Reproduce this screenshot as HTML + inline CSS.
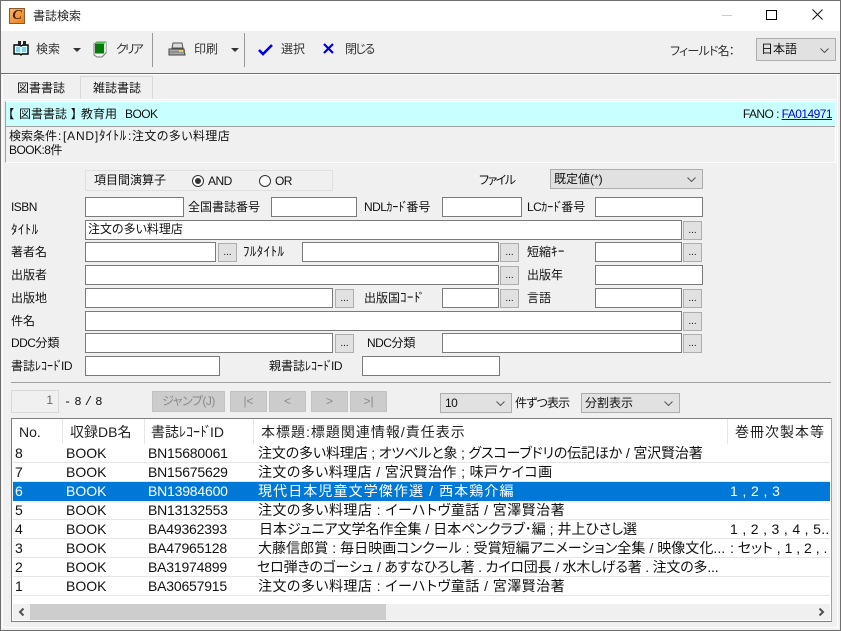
<!DOCTYPE html>
<html lang="ja"><head><meta charset="utf-8"><title>書誌検索</title>
<style>
*{box-sizing:border-box}
html,body{margin:0;padding:0;width:841px;height:631px;overflow:hidden;background:#f0f0f0}
body{font:12px/16px "Liberation Sans","Noto Sans CJK JP",sans-serif;color:#111;position:relative;font-feature-settings:"palt"}
.a,.l,.i,.b,.s,.n,.c{position:absolute}
.l{white-space:nowrap;height:16px}
.e{font-size:12px;letter-spacing:-.55px}
.k{font-size:13px;letter-spacing:.4px}
.d{margin:0 -2px 0 -2px}
.i{background:#fff;border:1px solid #7a7a7a;height:20px}
.b{width:19px;height:19px;background:#e1e1e1;border:1px solid #adadad;font-size:10px;line-height:18px;text-align:center}
.s{background:#e1e1e1;border:1px solid #adadad;padding-left:5px;line-height:18px}
.s svg{position:absolute;right:6px;top:7px}
.n{top:391px;height:21px;width:37px;background:#ccc;border:1px solid #c2c2c2;color:#8a8a8a;text-align:center;line-height:18px}
.c{font-size:14px;line-height:18px;white-space:nowrap;height:18px;overflow:hidden}
.r{position:absolute;left:13px;width:817px;height:19px;border-bottom:1px solid #e6e6e6;background:#fff}
.r .c{top:0}
.sel{background:#0078d7;border-bottom:0}
.sel .c{color:#fff}
</style></head><body>
<!-- window frame -->
<div class="a" style="left:0;top:0;width:841px;height:1px;background:#6f6f6f"></div>
<div class="a" style="left:0;top:0;width:1px;height:631px;background:#6f6f6f"></div>
<div class="a" style="left:840px;top:0;width:1px;height:631px;background:#6f6f6f"></div>
<div class="a" style="left:0;top:630px;width:841px;height:1px;background:#6f6f6f"></div>
<div class="a" style="left:1px;top:1px;width:839px;height:30px;background:#fff"></div>
<!-- logo -->
<div class="a" style="left:9px;top:8px;width:16px;height:16px;background:linear-gradient(135deg,#f9b36a,#e8801f);border:1px solid #8a5a2a;font:italic bold 14px/14px 'Liberation Serif',serif;color:#4a2208;text-align:center">C</div>
<div class="l" style="left:33px;top:8px;color:#222">書誌検索</div>
<!-- title buttons -->
<div class="a" style="left:722px;top:15px;width:10px;height:1px;background:#ccc"></div>
<div class="a" style="left:766px;top:10px;width:11px;height:10px;border:1px solid #000"></div>
<svg class="a" style="left:812px;top:9px" width="11" height="11"><path d="M.5.5l10 10M10.5.5l-10 10" stroke="#111" fill="none"/></svg>
<!-- toolbar -->
<div class="a" style="left:1px;top:73px;width:839px;height:1px;background:#707070"></div>
<svg class="a" style="left:13px;top:40px" width="16" height="16"><path d="M1 5h5l2 1 2-1h5v9H9l-1 1-1-1H1z" fill="#d8ffff" stroke="#000" stroke-width="1.4"/><path d="M3 7h4v5H3zM9 7h4v5H9z" fill="#7fd4f0"/><path d="M5 1h3v5H5zM10 1h3v5h-3z" fill="#222"/></svg>
<div class="l" style="left:36px;top:41px;color:#333">検索</div>
<svg class="a" style="left:73px;top:48px" width="9" height="5"><path d="M0 0h8L4 4z" fill="#333"/></svg>
<svg class="a" style="left:93px;top:41px" width="14" height="17"><path d="M1 3l3-2h9v11l-3 3-1 1H4l-3-2z" fill="#f2f2f2" stroke="#777"/><rect x="2" y="3" width="9" height="9.5" fill="#067a06"/><path d="M11 3l2-2v10l-2 2z" fill="#d8e8d8"/><path d="M2 3l2-2h9l-2 2z" fill="#58b858"/></svg>
<div class="l" style="left:116px;top:41px;color:#333;letter-spacing:-2px">クリア</div>
<div class="a" style="left:152px;top:33px;width:1px;height:34px;background:#999"></div>
<svg class="a" style="left:168px;top:42px" width="18" height="15"><path d="M5 1h9l1 5H4z" fill="#ddd" stroke="#555"/><path d="M1 7h15l1 6H1z" fill="#aaa" stroke="#444"/><path d="M2 10h15" stroke="#777"/><path d="M11 8h4v2h-4z" fill="#e8d05a"/></svg>
<div class="l" style="left:194px;top:41px;color:#333">印刷</div>
<svg class="a" style="left:231px;top:48px" width="9" height="5"><path d="M0 0h8L4 4z" fill="#333"/></svg>
<div class="a" style="left:244px;top:33px;width:1px;height:34px;background:#999"></div>
<svg class="a" style="left:258px;top:43px" width="16" height="13"><path d="M1 7l4 4L14 2" stroke="#0000e0" stroke-width="2.6" fill="none"/></svg>
<div class="l" style="left:281px;top:41px;color:#333">選択</div>
<svg class="a" style="left:323px;top:43px" width="11" height="11"><path d="M1 1l9 9M10 1l-9 9" stroke="#0000d8" stroke-width="2.2" fill="none"/></svg>
<div class="l" style="left:345px;top:41px;color:#333;letter-spacing:-1.5px">閉じる</div>
<div class="l" style="left:670px;top:43px;color:#333;letter-spacing:-.8px">フィールド名：</div>
<div class="s" style="left:756px;top:38px;width:80px;height:23px;padding-left:4px;line-height:20px"><span>日本語</span><svg width="9" height="6" style="top:9px"><path d="M.5 .5l4 4 4-4" stroke="#555" fill="none"/></svg></div>
<!-- tabs -->
<div class="a" style="left:2px;top:74px;width:836px;height:1px;background:#fff"></div>
<div class="l" style="left:17px;top:80px">図書書誌</div>
<div class="a" style="left:80px;top:76px;width:73px;height:24px;border:1px solid #d9d9d9;border-bottom:0"></div>
<div class="l" style="left:93px;top:80px">雑誌書誌</div>
<div class="a" style="left:2px;top:99px;width:836px;height:1px;background:#fff"></div>
<div class="a" style="left:2px;top:75px;width:1px;height:552px;background:#fff"></div>
<div class="a" style="left:837px;top:75px;width:1px;height:552px;background:#fff"></div>
<div class="a" style="left:2px;top:627px;width:836px;height:1px;background:#fff"></div>
<!-- header bar -->
<div class="a" style="left:5px;top:101px;width:831px;height:62px;border:1px solid #fff;border-left:1px solid #a0a0a0"></div>
<div class="a" style="left:6px;top:102px;width:829px;height:24px;background:#c8ffff"></div>
<div class="a" style="left:6px;top:126px;width:829px;height:1px;background:#a0a0a0"></div>
<div class="l" style="left:8px;top:106px">【</div>
<div class="l" style="left:19px;top:106px">図書書誌</div>
<div class="l" style="left:71px;top:106px">】</div>
<div class="l" style="left:81px;top:106px">教育用</div>
<div class="l e" style="left:125px;top:106px">BOOK</div>
<div class="l e" style="right:9px;top:106px">FANO : <span style="color:#0000e6;text-decoration:underline">FA014971</span></div>
<div class="l" style="left:9px;top:128px">検索条件</div>
<div class="l" style="left:58px;top:128px">:</div>
<div class="l" style="left:63px;top:128px;letter-spacing:.8px">[AND]</div>
<div class="l k" style="left:99px;top:128px">ﾀｲﾄﾙ</div>
<div class="l" style="left:128px;top:128px">:</div>
<div class="l" style="left:132px;top:128px;letter-spacing:.4px">注文の多い料理店</div>
<div class="l e" style="left:9px;top:142px">BOOK:8件</div>
<!-- operator group -->
<div class="a" style="left:85px;top:170px;width:248px;height:21px;border:1px solid #e0e0e0"></div>
<div class="l" style="left:94px;top:172px">項目間演算子</div>
<svg class="a" style="left:191px;top:174px" width="14" height="14"><circle cx="7" cy="7" r="5.5" fill="#fff" stroke="#333"/><circle cx="7" cy="7" r="3" fill="#333"/></svg>
<div class="l e" style="left:208px;top:173px">AND</div>
<svg class="a" style="left:258px;top:174px" width="14" height="14"><circle cx="7" cy="7" r="5.5" fill="#fff" stroke="#333"/></svg>
<div class="l e" style="left:275px;top:173px">OR</div>
<div class="l" style="left:479px;top:172px;letter-spacing:-1.5px">ファイル</div>
<div class="s" style="left:550px;top:169px;width:153px;height:20px;padding-left:3px;line-height:18px">既定値(*)<svg width="9" height="6"><path d="M.5 .5l4 4 4-4" stroke="#555" fill="none"/></svg></div>
<!-- row 1 -->
<div class="l e" style="left:11px;top:199px">ISBN</div>
<div class="i" style="left:85px;top:197px;width:99px"></div>
<div class="l" style="left:188px;top:199px">全国書誌番号</div>
<div class="i" style="left:271px;top:197px;width:86px"></div>
<div class="l" style="left:364px;top:199px"><span class="e">NDL</span>ｶｰﾄ<span class="d">ﾞ</span>番号</div>
<div class="i" style="left:442px;top:197px;width:80px"></div>
<div class="l" style="left:527px;top:199px"><span class="e">LC</span>ｶｰﾄ<span class="d">ﾞ</span>番号</div>
<div class="i" style="left:595px;top:197px;width:108px"></div>
<!-- row 2 -->
<div class="l k" style="left:11px;top:222px">ﾀｲﾄﾙ</div>
<div class="i" style="left:85px;top:220px;width:597px;padding-left:2px;line-height:17px">注文の多い料理店</div>
<div class="b" style="left:683px;top:221px">...</div>
<!-- row 3 -->
<div class="l" style="left:11px;top:244px">著者名</div>
<div class="i" style="left:85px;top:242px;width:131px"></div>
<div class="b" style="left:218px;top:243px">...</div>
<div class="l k" style="left:243px;top:244px">ﾌﾙﾀｲﾄﾙ</div>
<div class="i" style="left:302px;top:242px;width:197px"></div>
<div class="b" style="left:500px;top:243px">...</div>
<div class="l" style="left:527px;top:244px">短縮<span class="k">ｷｰ</span></div>
<div class="i" style="left:595px;top:242px;width:87px"></div>
<div class="b" style="left:683px;top:243px">...</div>
<!-- row 4 -->
<div class="l" style="left:11px;top:267px">出版者</div>
<div class="i" style="left:85px;top:265px;width:414px"></div>
<div class="b" style="left:500px;top:266px">...</div>
<div class="l" style="left:527px;top:267px">出版年</div>
<div class="i" style="left:595px;top:265px;width:108px"></div>
<!-- row 5 -->
<div class="l" style="left:11px;top:290px">出版地</div>
<div class="i" style="left:85px;top:288px;width:248px"></div>
<div class="b" style="left:335px;top:289px">...</div>
<div class="l" style="left:364px;top:290px">出版国<span class="k">ｺｰﾄ</span><span class="d">ﾞ</span></div>
<div class="i" style="left:442px;top:288px;width:57px"></div>
<div class="b" style="left:500px;top:289px">...</div>
<div class="l" style="left:527px;top:290px">言語</div>
<div class="i" style="left:595px;top:288px;width:87px"></div>
<div class="b" style="left:683px;top:289px">...</div>
<!-- row 6 -->
<div class="l" style="left:11px;top:313px">件名</div>
<div class="i" style="left:85px;top:311px;width:597px"></div>
<div class="b" style="left:683px;top:312px">...</div>
<!-- row 7 -->
<div class="l" style="left:11px;top:335px"><span class="e">DDC</span>分類</div>
<div class="i" style="left:85px;top:333px;width:248px"></div>
<div class="b" style="left:335px;top:334px">...</div>
<div class="l" style="left:367px;top:335px"><span class="e">NDC</span>分類</div>
<div class="i" style="left:442px;top:333px;width:240px"></div>
<div class="b" style="left:683px;top:334px">...</div>
<!-- row 8 -->
<div class="l" style="left:11px;top:358px">書誌ﾚｺｰﾄ<span class="d">ﾞ</span><span class="e">ID</span></div>
<div class="i" style="left:85px;top:356px;width:135px"></div>
<div class="l" style="left:269px;top:358px">親書誌ﾚｺｰﾄ<span class="d">ﾞ</span><span class="e">ID</span></div>
<div class="i" style="left:362px;top:356px;width:138px"></div>
<div class="a" style="left:11px;top:382px;width:820px;height:1px;background:#a0a0a0"></div>
<!-- pager -->
<div class="a" style="left:11px;top:390px;width:48px;height:23px;border:1px solid #d9d9d9;text-align:right;padding-right:5px;color:#666;line-height:18px">1</div>
<div class="l" style="left:64px;top:394px;font-family:'Liberation Mono',monospace;letter-spacing:-2px">- 8 / 8</div>
<div class="n" style="left:152px;width:73px;letter-spacing:-.5px">ジャンプ(J)</div>
<div class="n" style="left:230px">|&lt;</div>
<div class="n" style="left:269px">&lt;</div>
<div class="n" style="left:311px">&gt;</div>
<div class="n" style="left:350px">&gt;|</div>
<div class="s" style="left:440px;top:393px;width:72px;height:20px;padding-left:4px;line-height:18px"><span class="e">10</span><svg width="9" height="6"><path d="M.5 .5l4 4 4-4" stroke="#555" fill="none"/></svg></div>
<div class="l" style="left:515px;top:395px;letter-spacing:-.8px">件ずつ表示</div>
<div class="s" style="left:581px;top:393px;width:99px;height:20px;padding-left:3px;line-height:18px">分割表示<svg width="9" height="6"><path d="M.5 .5l4 4 4-4" stroke="#555" fill="none"/></svg></div>
<!-- table -->
<div class="a" style="left:11px;top:418px;width:821px;height:204px;border:1px solid #7f7f7f;border-right-color:#a0a0a0;background:#fff"></div>
<div class="a" style="left:62px;top:419px;width:1px;height:25px;background:#e5e5e5"></div>
<div class="a" style="left:144px;top:419px;width:1px;height:25px;background:#e5e5e5"></div>
<div class="a" style="left:253px;top:419px;width:1px;height:25px;background:#e5e5e5"></div>
<div class="a" style="left:727px;top:419px;width:1px;height:25px;background:#e5e5e5"></div>
<div class="c" style="left:19px;top:423px;color:#222">No.</div>
<div class="c" style="left:70px;top:423px;color:#222">収録DB名</div>
<div class="c" style="left:151px;top:423px;color:#222">書誌ﾚｺｰﾄ<span class="d">ﾞ</span>ID</div>
<div class="c" style="left:261px;top:423px;color:#222;letter-spacing:1px">本標題:標題関連情報/責任表示</div>
<div class="c" style="left:735px;top:423px;color:#222;letter-spacing:1px">巻冊次製本等</div>

<div class="r" style="top:444px"><span class="c" style="left:2px">8</span><span class="c" style="left:53px">BOOK</span><span class="c" style="left:135px;letter-spacing:-.2px">BN15680061</span><span class="c" style="left:245px;letter-spacing:-.15px">注文の多い料理店 ; オツベルと象 ; グスコーブドリの伝記ほか / 宮沢賢治著</span></div>
<div class="r" style="top:463px"><span class="c" style="left:2px">7</span><span class="c" style="left:53px">BOOK</span><span class="c" style="left:135px;letter-spacing:-.2px">BN15675629</span><span class="c" style="left:245px;letter-spacing:.4px">注文の多い料理店 / 宮沢賢治作 ; 味戸ケイコ画</span></div>
<div class="r sel" style="top:482px"><span class="c" style="left:2px">6</span><span class="c" style="left:53px">BOOK</span><span class="c" style="left:135px;letter-spacing:-.2px">BN13984600</span><span class="c" style="left:245px;letter-spacing:1.1px">現代日本児童文学傑作選 / 西本鶏介編</span><span class="c" style="left:717px;letter-spacing:.4px">1 , 2 , 3</span></div>
<div class="r" style="top:501px"><span class="c" style="left:2px">5</span><span class="c" style="left:53px">BOOK</span><span class="c" style="left:135px;letter-spacing:-.2px">BN13132553</span><span class="c" style="left:245px;letter-spacing:.45px">注文の多い料理店 : イーハトヴ童話 / 宮澤賢治著</span></div>
<div class="r" style="top:520px"><span class="c" style="left:2px">4</span><span class="c" style="left:53px">BOOK</span><span class="c" style="left:135px;letter-spacing:-.2px">BA49362393</span><span class="c" style="left:246px">日本ジュニア文学名作全集 / 日本ペンクラブ･編 ; 井上ひさし選</span><span class="c" style="left:717px;width:100px;letter-spacing:.33px">1 , 2 , 3 , 4 , 5..</span></div>
<div class="r" style="top:539px"><span class="c" style="left:2px">3</span><span class="c" style="left:53px">BOOK</span><span class="c" style="left:135px;letter-spacing:-.2px">BA47965128</span><span class="c" style="left:245px;letter-spacing:.05px">大藤信郎賞 : 毎日映画コンクール : 受賞短編アニメーション全集 / 映像文化...</span><span class="c" style="left:717px;width:100px">: セット , 1 , 2 , .</span></div>
<div class="r" style="top:558px"><span class="c" style="left:2px">2</span><span class="c" style="left:53px">BOOK</span><span class="c" style="left:135px;letter-spacing:-.2px">BA31974899</span><span class="c" style="left:244px;letter-spacing:-.2px">セロ弾きのゴーシュ / あすなひろし著 . カイロ団長 / 水木しげる著 . 注文の多...</span></div>
<div class="r" style="top:577px"><span class="c" style="left:2px">1</span><span class="c" style="left:53px">BOOK</span><span class="c" style="left:135px;letter-spacing:-.2px">BA30657915</span><span class="c" style="left:245px;letter-spacing:.45px">注文の多い料理店 : イーハトヴ童話 / 宮澤賢治著</span></div>
<!-- scrollbar -->
<div class="a" style="left:13px;top:604px;width:817px;height:16px;background:#f0f0f0"></div>
<div class="a" style="left:30px;top:604px;width:356px;height:16px;background:#cdcdcd"></div>
<svg class="a" style="left:18px;top:608px" width="7" height="8"><path d="M5.5 .5L2 4l3.5 3.5" stroke="#505050" stroke-width="2" fill="none"/></svg>
<svg class="a" style="left:818px;top:608px" width="7" height="8"><path d="M1.5 .5L5 4 1.5 7.5" stroke="#505050" stroke-width="2" fill="none"/></svg>
</body></html>
